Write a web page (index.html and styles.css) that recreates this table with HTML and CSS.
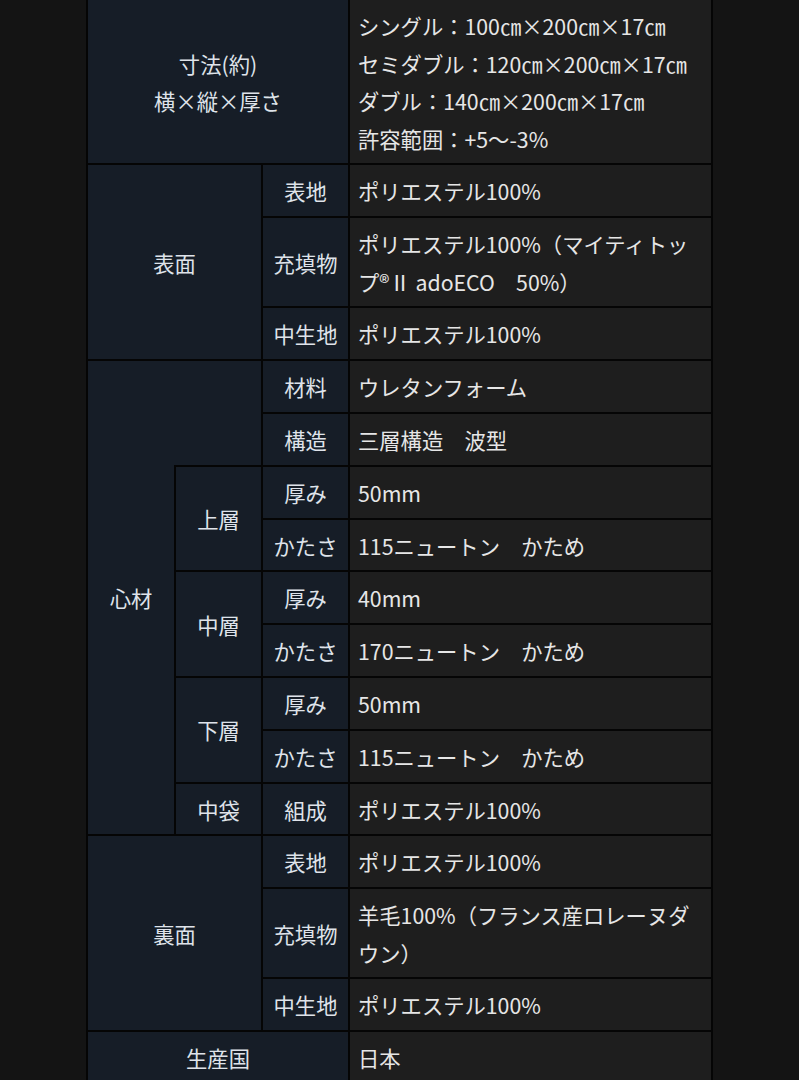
FILE: index.html
```html
<!DOCTYPE html>
<html lang="ja">
<head>
<meta charset="utf-8">
<title>仕様</title>
<link rel="stylesheet" href="styles.css">
</head>
<body>
<table class="spec">
  <colgroup>
    <col class="c1"><col class="c2"><col class="c3"><col class="c4">
  </colgroup>
  <tbody>
    <tr>
      <th colspan="3">寸法(約)<br>横×縦×厚さ</th>
      <td>シングル：100㎝×200㎝×17㎝<br>セミダブル：120㎝×200㎝×17㎝<br>ダブル：140㎝×200㎝×17㎝<br>許容範囲：+5～-3%</td>
    </tr>
    <tr>
      <th colspan="2" rowspan="3">表面</th>
      <th>表地</th>
      <td>ポリエステル100%</td>
    </tr>
    <tr>
      <th>充填物</th>
      <td>ポリエステル100%（マイティトップ®Ⅱ adoECO　50%）</td>
    </tr>
    <tr>
      <th>中生地</th>
      <td>ポリエステル100%</td>
    </tr>
    <tr>
      <th rowspan="9">心材</th>
      <th rowspan="2" class="blank"></th>
      <th>材料</th>
      <td>ウレタンフォーム</td>
    </tr>
    <tr>
      <th>構造</th>
      <td>三層構造　波型</td>
    </tr>
    <tr>
      <th rowspan="2">上層</th>
      <th>厚み</th>
      <td>50mm</td>
    </tr>
    <tr>
      <th>かたさ</th>
      <td>115ニュートン　かため</td>
    </tr>
    <tr>
      <th rowspan="2">中層</th>
      <th>厚み</th>
      <td>40mm</td>
    </tr>
    <tr>
      <th>かたさ</th>
      <td>170ニュートン　かため</td>
    </tr>
    <tr>
      <th rowspan="2">下層</th>
      <th>厚み</th>
      <td>50mm</td>
    </tr>
    <tr>
      <th>かたさ</th>
      <td>115ニュートン　かため</td>
    </tr>
    <tr>
      <th>中袋</th>
      <th>組成</th>
      <td>ポリエステル100%</td>
    </tr>
    <tr>
      <th colspan="2" rowspan="3">裏面</th>
      <th>表地</th>
      <td>ポリエステル100%</td>
    </tr>
    <tr>
      <th>充填物</th>
      <td>羊毛100%（フランス産ロレーヌダウン）</td>
    </tr>
    <tr>
      <th>中生地</th>
      <td>ポリエステル100%</td>
    </tr>
    <tr>
      <th colspan="3">生産国</th>
      <td>日本</td>
    </tr>
  </tbody>
</table>
</body>
</html>
```
FILE: styles.css
```css
html, body {
  margin: 0;
  padding: 0;
  background: #141414;
}

body {
  font-family: "Noto Sans CJK JP", "Noto Sans", sans-serif;
  font-size: 21.3px;
  line-height: 37.5px;
  color: #e6e6e6;
}

.spec {
  border-collapse: collapse;
  table-layout: fixed;
  width: 627px;
  margin: -2px auto 0;
}

.c1 { width: 88px; }
.c2 { width: 87px; }
.c3 { width: 87px; }
.c4 { width: 363px; }

.spec th,
.spec td {
  border: 2px solid #050505;
  padding: 7px 8px 6.3px;
  vertical-align: middle;
}

.spec th {
  background: #161d27;
  color: #dfe3ea;
  font-weight: 400;
  text-align: center;
  padding-left: 0;
  padding-right: 0;
}

.spec td {
  background: #1e1e1e;
  text-align: left;
}

.spec th.blank {
  border-left-style: hidden;
}
```
